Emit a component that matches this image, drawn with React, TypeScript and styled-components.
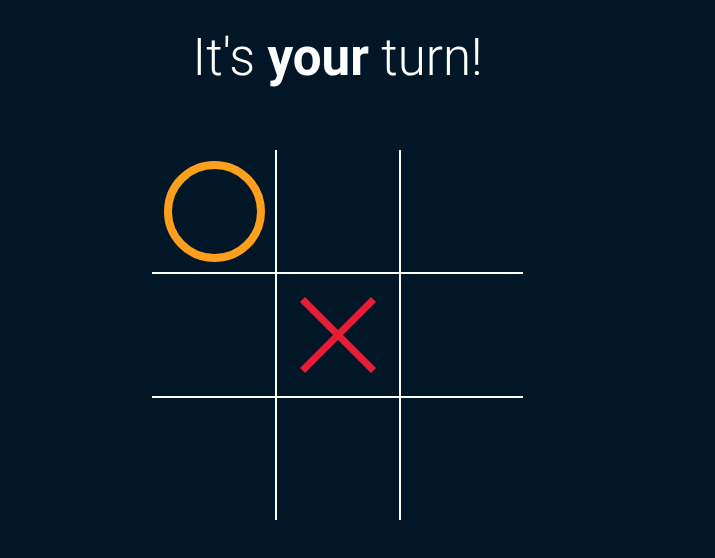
import React from "react";
import styled, { createGlobalStyle } from "styled-components";

const Global = createGlobalStyle`
  html, body {
    margin: 0;
    padding: 0;
    background: #011627;
    font-family: Roboto, "Noto Sans", sans-serif;
  }
`;

const Page = styled.div`
  width: 675px;
  min-height: 558px;
  display: flex;
  flex-direction: column;
  align-items: center;
  background: #011627;
`;

const Title = styled.h1`
  margin: 28px 0 0;
  font-family: Roboto, sans-serif;
  font-size: 51px;
  font-weight: 300;
  line-height: 60px;
  color: #fdfffc;
  letter-spacing: 0;
  b {
    font-weight: 700;
  }
`;

const Board = styled.div`
  margin-top: 62px;
  display: grid;
  grid-template-columns: 123px 122px 122px;
  grid-template-rows: 122px 122px 122px;
  gap: 2px;
  background: #fdfffc;
`;

const Cell = styled.div`
  background: #011627;
  display: flex;
  align-items: center;
  justify-content: center;
`;

const Circle = styled.div`
  box-sizing: border-box;
  width: 101px;
  height: 101px;
  border: 8px solid #ff9f1c;
  border-radius: 50%;
  margin-left: 1px;
`;

const Cross = () => (
  <svg width="80" height="80" viewBox="-40 -40 80 80">
    <g stroke="#e71d36" strokeWidth="7" strokeLinecap="butt">
      <line x1="-35.5" y1="-35.5" x2="35.5" y2="35.5" />
      <line x1="35.5" y1="-35.5" x2="-35.5" y2="35.5" />
    </g>
  </svg>
);

type Mark = "O" | "X" | null;
const board: Mark[] = ["O", null, null, null, "X", null, null, null, null];

export default function App() {
  return (
    <>
      <Global />
      <Page>
        <Title>
          It's <b>your</b> turn!
        </Title>
        <Board>
          {board.map((m, i) => (
            <Cell key={i}>
              {m === "O" && <Circle />}
              {m === "X" && <Cross />}
            </Cell>
          ))}
        </Board>
      </Page>
    </>
  );
}
